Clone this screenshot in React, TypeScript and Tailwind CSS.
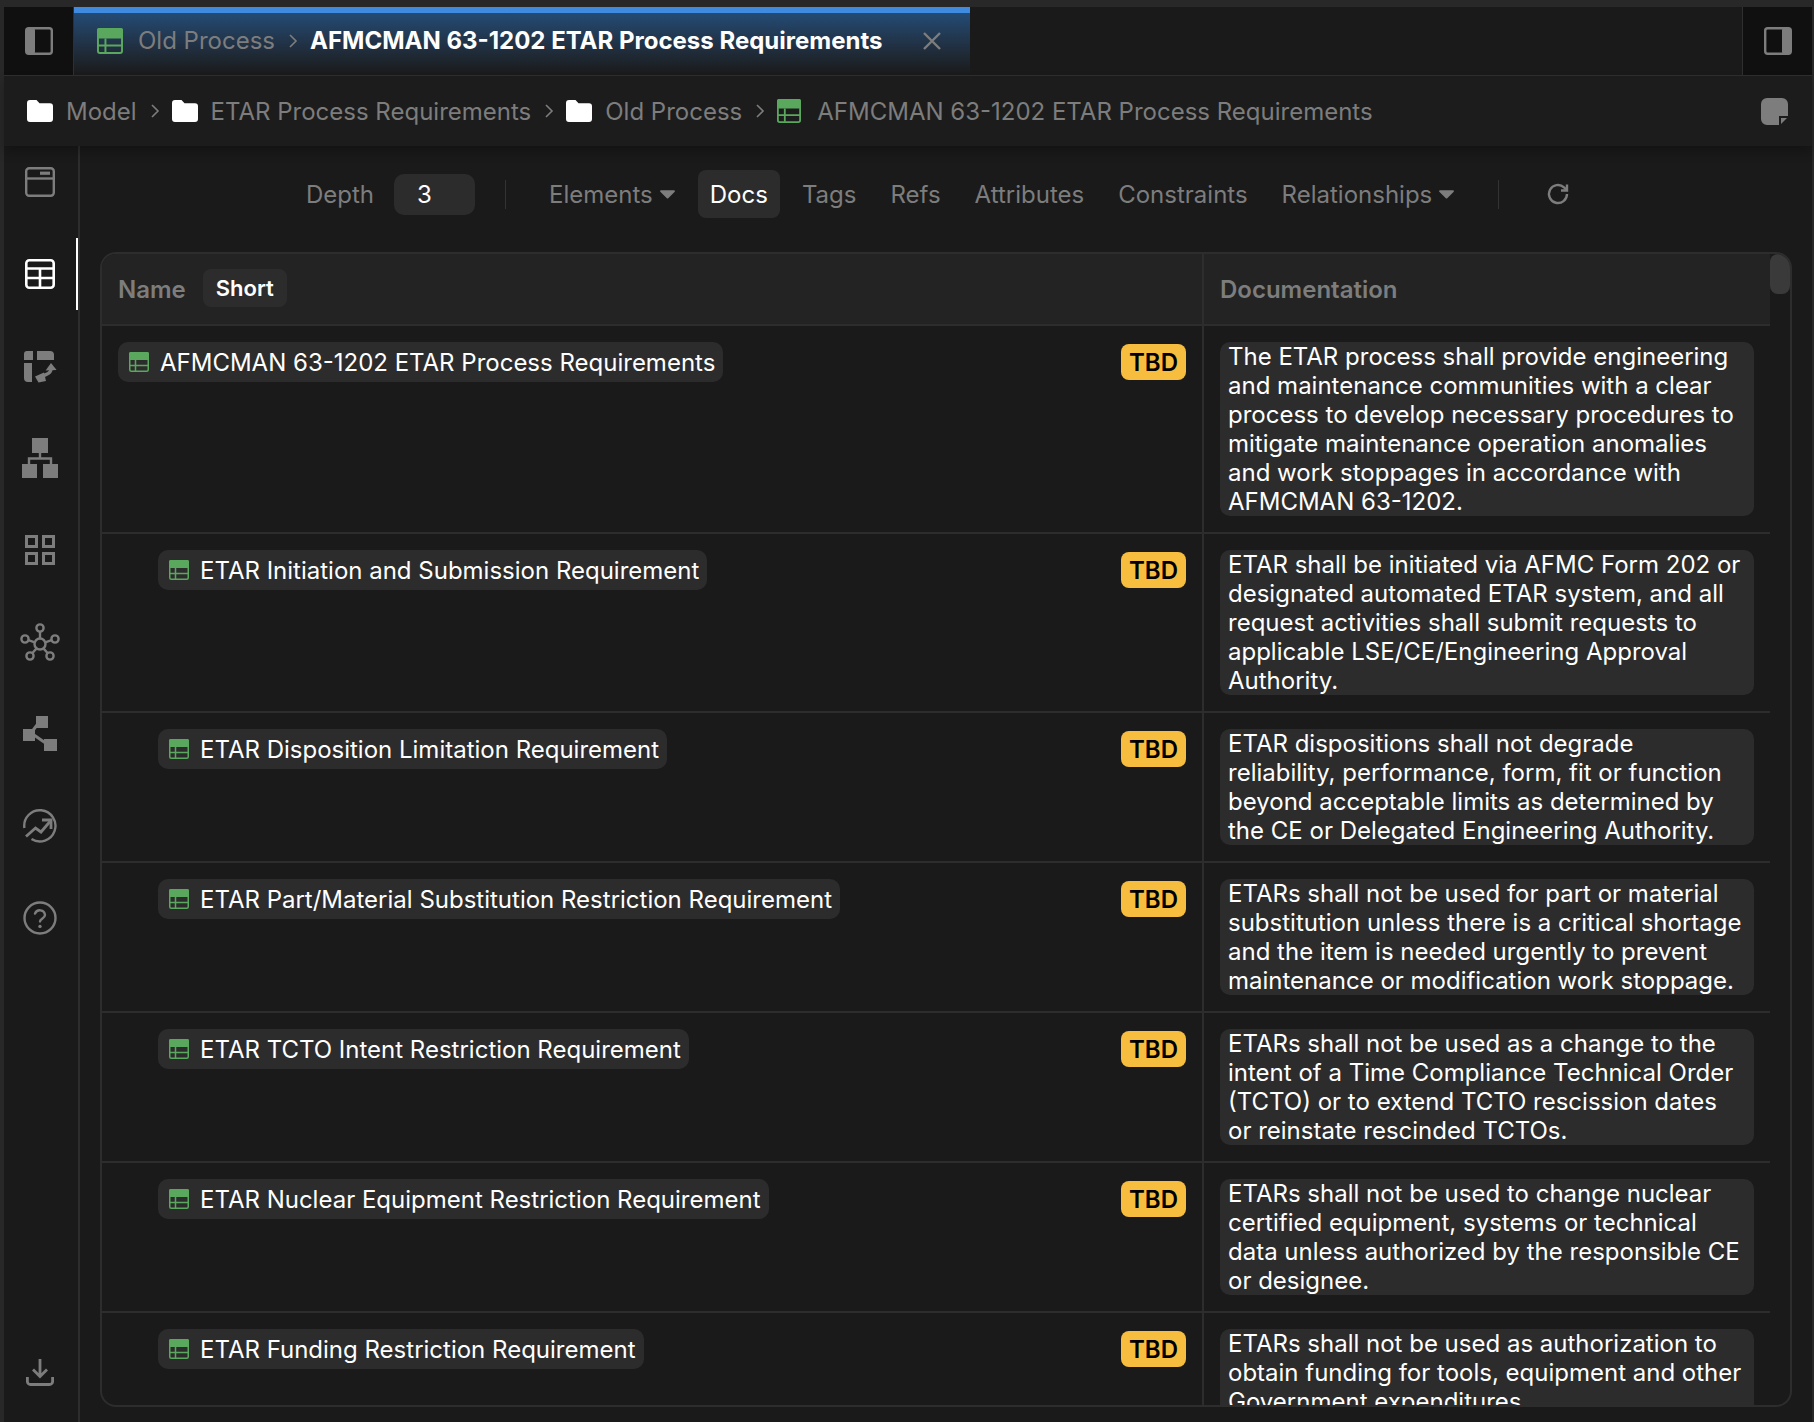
import React from "react";

function TableIcon({ className = "w-[20px] h-[20px]" }: { className?: string }) {
  return (
    <svg viewBox="0 0 20 20" className={`shrink-0 ${className}`} fill="none">
      <rect x="0.75" y="0.75" width="18.5" height="18.5" rx="1.5" stroke="#5aa85e" strokeWidth="1.5" />
      <rect x="0" y="0" width="20" height="8" rx="1.5" fill="#5aa85e" />
      <path d="M0.75 13.5H19.25M6.5 8V19" stroke="#5aa85e" strokeWidth="1.5" />
    </svg>
  );
}

function Folder() {
  return (
    <svg viewBox="0 0 26 22" className="w-[26px] h-[22px] shrink-0" fill="#ffffff">
      <path d="M0 3a3 3 0 0 1 3-3h6.5l3 3.2H23a3 3 0 0 1 3 3V19a3 3 0 0 1-3 3H3a3 3 0 0 1-3-3Z" />
    </svg>
  );
}

function Chevron() {
  return (
    <svg viewBox="0 0 10 16" className="w-[10px] h-[16px] shrink-0" fill="none" stroke="#7d7d7d" strokeWidth="1.6">
      <path d="M2 2l6 6-6 6" />
    </svg>
  );
}

function Caret() {
  return (
    <svg viewBox="0 0 16 10" className="w-[15px] h-[10px] shrink-0 ml-[7px]" fill="#7d7d7d">
      <path d="M1 1h14a1 1 0 0 1 .7 1.6L8.8 9.4a1 1 0 0 1-1.5 0L.3 2.6A1 1 0 0 1 1 1Z" />
    </svg>
  );
}

function PanelToggle({ side }: { side: "left" | "right" }) {
  return (
    <svg viewBox="0 0 28 28" className="w-[28px] h-[28px]" fill="none">
      <rect x="1.2" y="1.2" width="25.6" height="25.6" rx="2.5" stroke="#7d7d7d" strokeWidth="2.4" />
      {side === "left" ? (
        <rect x="1" y="1" width="9" height="26" rx="2" fill="#7d7d7d" />
      ) : (
        <rect x="18" y="1" width="9" height="26" rx="2" fill="#7d7d7d" />
      )}
    </svg>
  );
}

const G = "#7d7d7d";

const railIcons: React.ReactNode[] = [
  <svg key="a" viewBox="0 0 30 30" className="w-[30px] h-[30px]" fill="none" stroke={G} strokeWidth="2.4">
    <rect x="1.2" y="1.2" width="27.6" height="27.6" rx="3" />
    <path d="M1.2 11.5H28.8" />
    <path d="M15 6.2H25" strokeWidth="3.2" />
  </svg>,
  <svg key="b" viewBox="0 0 30 30" className="w-[30px] h-[30px]" fill="none" stroke="#ffffff" strokeWidth="2.6">
    <rect x="1.3" y="1.3" width="27.4" height="27.4" rx="3" />
    <path d="M1.3 9.5H28.7M1.3 19H28.7M15 9.5V28.7" />
  </svg>,
  <svg key="c" viewBox="0 0 33 33" className="w-[33px] h-[33px]" fill={G}>
    <path d="M0 4a3 3 0 0 1 3-3h6v9H0Z" />
    <path d="M13 1h13a4 4 0 0 1 4 4v5H13Z" />
    <path d="M0 13h8v19H4a4 4 0 0 1-4-4Z" />
    <path d="M27 19c0 5-5 5-8 7-1.2.8-2 1.4-2.6 2.2" fill="none" stroke={G} strokeWidth="3.4" />
    <path d="M27 13l5.6 7-11 .4Z" />
    <path d="M11 26.5l9-4 2 8.5-7.5 1.5Z" />
  </svg>,
  <svg key="d" viewBox="0 0 36 40" className="w-[36px] h-[40px]" fill={G}>
    <rect x="10" y="0" width="16" height="15" />
    <rect x="0" y="26" width="15" height="14" />
    <rect x="21" y="26" width="15" height="14" />
    <path d="M18 15v5M7 26v-5.5h22V26" fill="none" stroke={G} strokeWidth="2.4" />
  </svg>,
  <svg key="e" viewBox="0 0 30 30" className="w-[30px] h-[30px]" fill="none" stroke={G} strokeWidth="3">
    <rect x="1.5" y="1.5" width="10" height="10" />
    <rect x="18.5" y="1.5" width="10" height="10" />
    <rect x="1.5" y="18.5" width="10" height="10" />
    <rect x="18.5" y="18.5" width="10" height="10" />
  </svg>,
  <svg key="f" viewBox="0 0 40 38" className="w-[40px] h-[38px]" fill="none" stroke={G} strokeWidth="2.4">
    <circle cx="20" cy="21" r="5.5" />
    <circle cx="20" cy="5" r="3.6" />
    <circle cx="5" cy="16" r="3.6" />
    <circle cx="35" cy="16" r="3.6" />
    <circle cx="10" cy="33" r="3.6" />
    <circle cx="30" cy="33" r="3.6" />
    <path d="M20 8.6V15.5M8.4 17.2L14.8 19.4M31.6 17.2L25.2 19.4M12.2 30.2L16.6 25.4M27.8 30.2L23.4 25.4" />
  </svg>,
  <svg key="g" viewBox="0 0 34 36" className="w-[34px] h-[36px]" fill={G}>
    <rect x="13" y="0" width="12" height="12" />
    <rect x="0" y="13" width="12" height="12" />
    <rect x="21" y="23" width="13" height="12" />
    <path d="M14 9L8 17M8 17L24 28" fill="none" stroke={G} strokeWidth="3" />
  </svg>,
  <svg key="h" viewBox="0 0 34 34" className="w-[34px] h-[34px]" fill="none" stroke={G} strokeWidth="2.4">
    <path d="M1.4 19A15.6 15.6 0 1 1 8.5 30" />
    <path d="M3 27.5L12.5 19l5.5 4 9-10.5" strokeWidth="2.8" />
    <path d="M19 11h9v9" strokeWidth="2.8" />
  </svg>,
  <svg key="i" viewBox="0 0 34 34" className="w-[34px] h-[34px]" fill="none" stroke={G} strokeWidth="2.4">
    <circle cx="17" cy="17" r="15.5" />
    <path d="M12 12.6a5.2 5.2 0 0 1 10 1.4c0 3.4-5 4-5 6.4" strokeLinecap="round" />
    <circle cx="17" cy="25.4" r="1.7" fill={G} stroke="none" />
  </svg>,
];

const rows: { name: string; indent: boolean; doc: string[] }[] = [
  {
    name: "AFMCMAN 63-1202 ETAR Process Requirements",
    indent: false,
    doc: [
      "The ETAR process shall provide engineering",
      "and maintenance communities with a clear",
      "process to develop necessary procedures to",
      "mitigate maintenance operation anomalies",
      "and work stoppages in accordance with",
      "AFMCMAN 63-1202.",
    ],
  },
  {
    name: "ETAR Initiation and Submission Requirement",
    indent: true,
    doc: [
      "ETAR shall be initiated via AFMC Form 202 or",
      "designated automated ETAR system, and all",
      "request activities shall submit requests to",
      "applicable LSE/CE/Engineering Approval",
      "Authority.",
    ],
  },
  {
    name: "ETAR Disposition Limitation Requirement",
    indent: true,
    doc: [
      "ETAR dispositions shall not degrade",
      "reliability, performance, form, fit or function",
      "beyond acceptable limits as determined by",
      "the CE or Delegated Engineering Authority.",
    ],
  },
  {
    name: "ETAR Part/Material Substitution Restriction Requirement",
    indent: true,
    doc: [
      "ETARs shall not be used for part or material",
      "substitution unless there is a critical shortage",
      "and the item is needed urgently to prevent",
      "maintenance or modification work stoppage.",
    ],
  },
  {
    name: "ETAR TCTO Intent Restriction Requirement",
    indent: true,
    doc: [
      "ETARs shall not be used as a change to the",
      "intent of a Time Compliance Technical Order",
      "(TCTO) or to extend TCTO rescission dates",
      "or reinstate rescinded TCTOs.",
    ],
  },
  {
    name: "ETAR Nuclear Equipment Restriction Requirement",
    indent: true,
    doc: [
      "ETARs shall not be used to change nuclear",
      "certified equipment, systems or technical",
      "data unless authorized by the responsible CE",
      "or designee.",
    ],
  },
  {
    name: "ETAR Funding Restriction Requirement",
    indent: true,
    doc: [
      "ETARs shall not be used as authorization to",
      "obtain funding for tools, equipment and other",
      "Government expenditures.",
    ],
  },
];

function ToolItem({ label, caret, active, className = "" }: { label: string; caret?: boolean; active?: boolean; className?: string }) {
  return (
    <div
      className={`flex items-center h-[48px] rounded-[8px] ${active ? "bg-[#2c2c2c] text-white px-[12px]" : "text-[#7d7d7d]"} ${className}`}
    >
      {label}
      {caret && <Caret />}
    </div>
  );
}

function Crumb({ label, first }: { label: string; first?: boolean }) {
  return (
    <>
      {!first && <div className="ml-[13px] mr-[12px]"><Chevron /></div>}
      <Folder />
      <span className="ml-[13px]">{label}</span>
    </>
  );
}

export default function App() {
  return (
    <div
      className="w-[1814px] h-[1422px] bg-[#282828] overflow-hidden flex flex-col pt-[7px] pl-[4px] pr-[2px] text-[24px] leading-[29px] tracking-[0px] antialiased"
      style={{ fontFamily: "Inter, 'Liberation Sans', sans-serif" }}
    >
      {/* Tab bar */}
      <div className="flex h-[69px] shrink-0 bg-[#1a1a1a] border-b border-[#2f2f2f]">
        <div className="w-[70px] bg-[#101010] flex items-center justify-center border-r border-[#2f2f2f]">
          <PanelToggle side="left" />
        </div>
        <div className="w-[896px] flex flex-col bg-gradient-to-b from-[#24507f] to-[#1a1a1a]">
          <div className="h-[6px] bg-[#3f8be0]" />
          <div className="flex-1 flex items-center pl-[23px] pb-[7px]">
            <TableIcon className="w-[26px] h-[26px]" />
            <span className="ml-[15px] text-[#7d7d7d]">Old Process</span>
            <div className="ml-[13px] mr-[12px]"><Chevron /></div>
            <span className="font-bold text-white whitespace-nowrap">AFMCMAN 63-1202 ETAR Process Requirements</span>
            <svg viewBox="0 0 20 20" className="w-[20px] h-[20px] ml-[40px]" fill="none" stroke="#7d7d7d" strokeWidth="2.4">
              <path d="M2 2l16 16M18 2L2 18" />
            </svg>
          </div>
        </div>
        <div className="flex-1 border-r border-[#2f2f2f]" />
        <div className="w-[69px] bg-[#101010] flex items-center justify-center">
          <PanelToggle side="right" />
        </div>
      </div>

      {/* Breadcrumb */}
      <div className="flex items-center h-[70px] shrink-0 bg-[#1c1c1c] pl-[23px] pr-[24px] text-[#7d7d7d] shadow-[0_6px_10px_rgba(0,0,0,0.25)] relative z-10">
        <Crumb label="Model" first />
        <Crumb label="ETAR Process Requirements" />
        <Crumb label="Old Process" />
        <div className="ml-[13px] mr-[12px]"><Chevron /></div>
        <TableIcon className="w-[24px] h-[24px]" />
        <span className="ml-[16px]">AFMCMAN 63-1202 ETAR Process Requirements</span>
        <svg viewBox="0 0 27 27" className="w-[27px] h-[27px] ml-auto" fill={G}>
          <path d="M6 0h15a6 6 0 0 1 6 6v12h-9v9H6a6 6 0 0 1-6-6V6a6 6 0 0 1 6-6Z" />
          <path d="M20 20h6l-6 6Z" />
        </svg>
      </div>

      {/* Body */}
      <div className="flex-1 flex min-h-0 bg-[#1a1a1a]">
        {/* Rail */}
        <div className="w-[76px] shrink-0 border-r-2 border-[#2d2d2d] flex flex-col items-stretch gap-[20px] pb-[36px]">
          {railIcons.map((icon, i) => (
            <div key={i} className={`h-[72px] flex items-center justify-center border-r-2 ${i === 1 ? "border-white" : "border-transparent"}`}>
              {icon}
            </div>
          ))}
          <div className="mt-auto flex justify-center pr-[2px]">
            <svg viewBox="0 0 28 28" className="w-[28px] h-[28px]" fill="none" stroke={G} strokeWidth="2.8">
              <path d="M14 1V18M7 11.5l7 7 7-7" />
              <path d="M1.4 19v4.5a3 3 0 0 0 3 3h19.2a3 3 0 0 0 3-3V19" />
            </svg>
          </div>
        </div>

        {/* Main */}
        <div className="flex-1 min-w-0 flex flex-col pl-[20px] pr-[20px] pb-[15px]">
          {/* Toolbar */}
          <div className="h-[106px] shrink-0 flex items-center pl-[206px] pb-[10px] whitespace-nowrap">
            <span className="text-[#7d7d7d]">Depth</span>
            <div className="ml-[20px] w-[81px] h-[41px] rounded-[10px] bg-[#2c2c2c] text-white flex items-center pl-[23px]">3</div>
            <div className="ml-[30px] w-[1px] h-[29px] bg-[#333333]" />
            <ToolItem label="Elements" caret className="ml-[43px]" />
            <ToolItem label="Docs" active className="ml-[23px]" />
            <ToolItem label="Tags" className="ml-[22px]" />
            <ToolItem label="Refs" className="ml-[34px]" />
            <ToolItem label="Attributes" className="ml-[34px]" />
            <ToolItem label="Constraints" className="ml-[34px]" />
            <ToolItem label="Relationships" caret className="ml-[34px]" />
            <div className="ml-[44px] w-[1px] h-[29px] bg-[#333333]" />
            <svg viewBox="0 0 24 24" className="w-[24px] h-[24px] ml-[47px]" fill="none" stroke={G} strokeWidth="2.4">
              <path d="M21 12a9 9 0 1 1-3-6.7L21 8" />
              <path d="M21 2.5V8.5h-6" />
            </svg>
          </div>

          {/* Table */}
          <div className="flex-1 min-h-0 flex rounded-[16px] border-2 border-[#2d2d2d] overflow-hidden">
            <div className="w-[1668px] shrink-0 flex flex-col">
              <div className="flex h-[72px] shrink-0 bg-[#232323] border-b-2 border-[#2d2d2d] font-semibold text-[#7d7d7d]">
                <div className="w-[1102px] shrink-0 flex items-center pl-[16px] border-r-2 border-[#2d2d2d]">
                  Name
                  <span className="ml-[17px] h-[38px] px-[13px] flex items-center rounded-[8px] bg-[#2c2c2c] text-white text-[22px] mb-[2px]">Short</span>
                </div>
                <div className="flex-1 flex items-center pl-[16px]">Documentation</div>
              </div>
              {rows.map((r) => (
                <div key={r.name} className="flex shrink-0 border-b-2 border-[#2d2d2d] text-white">
                  <div className={`w-[1102px] shrink-0 flex items-start justify-between py-[16px] pr-[16px] border-r-2 border-[#2d2d2d] ${r.indent ? "pl-[56px]" : "pl-[16px]"}`}>
                    <div className="flex items-center h-[40px] rounded-[10px] bg-[#2c2c2c] pl-[11px] pr-[8px] whitespace-nowrap">
                      <TableIcon />
                      <span className="ml-[11px]">{r.name}</span>
                    </div>
                    <div className="mt-[2px] h-[36px] w-[65px] rounded-[8px] bg-[#f7bd3f] text-black font-semibold flex items-center justify-center">TBD</div>
                  </div>
                  <div className="flex-1 py-[16px] pl-[16px] pr-[16px]">
                    <div className="rounded-[10px] bg-[#2c2c2c] px-[8px] whitespace-nowrap">
                      {r.doc.map((l) => (
                        <div key={l}>{l}</div>
                      ))}
                    </div>
                  </div>
                </div>
              ))}
            </div>
            <div className="flex-1 flex flex-col">
              <div className="h-[40px] rounded-[8px] bg-[#3a3a3a]" />
            </div>
          </div>
        </div>
      </div>
    </div>
  );
}
